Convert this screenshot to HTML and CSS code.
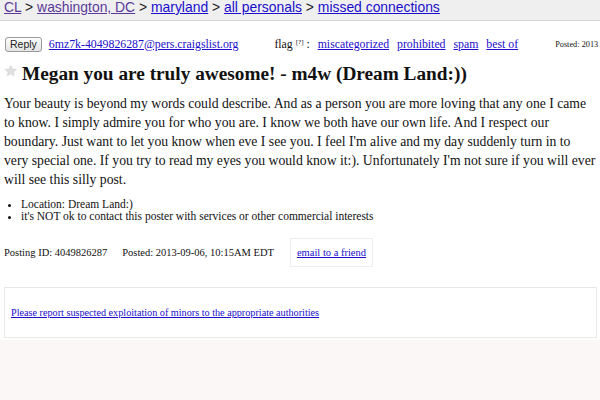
FILE: index.html
```html
<!DOCTYPE html>
<html>
<head>
<meta charset="utf-8">
<link rel="stylesheet" href="styles.css">
</head>
<body>
<div class="topbar">
  <a class="visited" href="#">CL</a> &gt; <a class="visited" href="#">washington, DC</a> &gt; <a href="#">maryland</a> &gt; <a href="#">all personals</a> &gt; <a href="#">missed connections</a>
</div>
<div class="page">
  <div class="replyrow">
    <span class="btn">Reply</span>
    <a class="email" href="#">6mz7k-4049826287@pers.craigslist.org</a>
    <span class="flag">flag <sup class="q">[?]</sup> : <a href="#">miscategorized</a> <a href="#">prohibited</a> <a href="#">spam</a> <a href="#">best of</a></span>
    <span class="posted">Posted: 2013</span>
  </div>
  <h2 class="title"><span class="star">★</span>Megan you are truly awesome! - m4w (Dream Land:))</h2>
  <p class="body">Your beauty is beyond my words could describe. And as a person you are more loving that any one I came to know. I simply admire you for who you are. I know we both have our own life. And I respect our boundary. Just want to let you know when eve I see you. I feel I'm alive and my day suddenly turn in to very special one. If you try to read my eyes you would know it:). Unfortunately I'm not sure if you will ever will see this silly post.</p>
  <ul class="notes">
    <li>Location: Dream Land:)</li>
    <li>it's NOT ok to contact this poster with services or other commercial interests</li>
  </ul>
  <div class="meta">
    <span>Posting ID: 4049826287</span>
    <span>Posted: 2013-09-06, 10:15AM EDT</span>
    <span class="friend"><a href="#">email to a friend</a></span>
  </div>
  <div class="report">
    <a href="#">Please report suspected exploitation of minors to the appropriate authorities</a>
  </div>
</div>
</body>
</html>
```
FILE: styles.css
```css
html, body { margin: 0; padding: 0; }
body {
  background: #faf7f6;
  font-family: "Liberation Serif", "Times New Roman", serif;
  color: #111;
  width: 600px;
  height: 400px;
  overflow: hidden;
}
a { color: #1a0dcc; }
.topbar {
  background: #efefef;
  border-bottom: 1px solid #d4d4d4;
  height: 21px;
  box-sizing: border-box;
  padding-left: 4px;
  font-family: "Liberation Sans", Arial, sans-serif;
  font-size: 13.9px;
  line-height: 14px;
  padding-top: 0;
  color: #222;
  white-space: nowrap;
}
.topbar a { color: #1a0dcc; }
.topbar a.visited { color: #5b3a9a; }
.page {
  background: #fff;
  padding: 15px 0 2px 4px;
}
.replyrow {
  display: flex;
  align-items: center;
  font-size: 11.8px;
  height: 16px;
  white-space: nowrap;
}
.btn {
  display: inline-block;
  font-family: "Liberation Sans", Arial, sans-serif;
  font-size: 10.5px;
  line-height: 13px;
  padding: 0 4px;
  border: 1px solid #9a9a9a;
  border-radius: 3px;
  background: linear-gradient(#fdfdfd, #e4e4e4);
  color: #222;
  margin-left: 1px;
}
.email { margin-left: 7px; }
.flag { margin-left: 36px; }
.flag a { margin-left: 5px; }
.q { font-size: 7px; vertical-align: 4px; }
.posted { margin-left: 37px; font-size: 8.3px; }
.title {
  display: flex;
  align-items: center;
  margin: 10px 0 0 0;
  font-size: 19.3px;
  line-height: 24px;
  font-weight: bold;
  white-space: nowrap;
}
.star {
  color: #e0e0e0;
  font-size: 15px;
  font-weight: normal;
  width: 18px;
  margin-top: -6px;
  text-shadow: 0 0 1px #aaa;
}
.body {
  margin: 8px 0 0 0;
  font-size: 13.7px;
  line-height: 19px;
  width: 593px;
}
.notes {
  margin: 9px 0 0 0;
  padding-left: 17px;
  font-size: 11.5px;
  line-height: 12px;
}
.meta {
  display: flex;
  align-items: center;
  margin-top: 16px;
  font-size: 10.5px;
  white-space: nowrap;
}
.meta span:nth-child(2) { margin-left: 15px; }
.friend {
  margin-left: 16px;
  border: 1px solid #eee;
  padding: 8px 6px;
}
.report {
  margin: 20px 3px 0 0;
  border: 1px solid #e8e8e8;
  padding: 18px 6px 17px 6px;
  font-size: 10.2px;
  line-height: 14px;
}
```
